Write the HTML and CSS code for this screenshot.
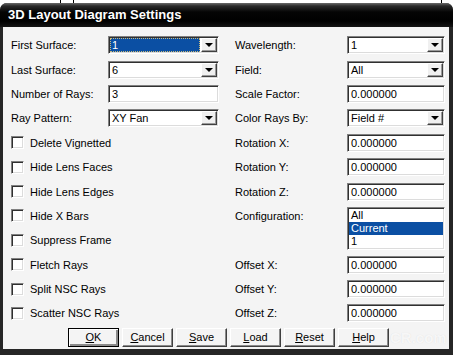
FILE: index.html
```html
<!DOCTYPE html>
<html lang="en">

<head>
    <meta charset="UTF-8">
    <title>3D Layout Diagram Settings</title>
    <link rel="stylesheet" href="styles.css">
</head>

<body>
    <!-- 窗口后面的表格残留 -->
    <div class="backdrop">
        <i class="grid-line first"></i>
        <i class="grid-line"></i>
        <i class="grid-line far"></i>
    </div>

    <div class="window">
        <div class="titlebar">3D Layout Diagram Settings</div>

        <div class="client">
            <div class="form">
                <span class="label">First Surface:</span>
                <div class="field select"><span class="value selected">1</span><span class="arrow"></span></div>
                <span class="label">Wavelength:</span>
                <div class="field select narrow"><span class="value">1</span><span class="arrow"></span></div>

                <span class="label">Last Surface:</span>
                <div class="field select"><span class="value">6</span><span class="arrow"></span></div>
                <span class="label">Field:</span>
                <div class="field select narrow"><span class="value">All</span><span class="arrow"></span></div>

                <span class="label">Number of Rays:</span>
                <div class="field"><span class="value">3</span></div>
                <span class="label">Scale Factor:</span>
                <div class="field narrow"><span class="value">0.000000</span></div>

                <span class="label">Ray Pattern:</span>
                <div class="field select"><span class="value">XY Fan</span><span class="arrow"></span></div>
                <span class="label">Color Rays By:</span>
                <div class="field select narrow"><span class="value">Field #</span><span class="arrow"></span></div>

                <label class="check"><span class="box"></span>Delete Vignetted</label>
                <span class="label">Rotation X:</span>
                <div class="field narrow"><span class="value">0.000000</span></div>

                <label class="check"><span class="box"></span>Hide Lens Faces</label>
                <span class="label">Rotation Y:</span>
                <div class="field narrow"><span class="value">0.000000</span></div>

                <label class="check"><span class="box"></span>Hide Lens Edges</label>
                <span class="label">Rotation Z:</span>
                <div class="field narrow"><span class="value">0.000000</span></div>

                <label class="check"><span class="box"></span>Hide X Bars</label>
                <span class="label">Configuration:</span>
                <div class="listbox">
                    <div class="item">All</div>
                    <div class="item selected">Current</div>
                    <div class="item">1</div>
                </div>

                <label class="check"><span class="box"></span>Suppress Frame</label>
                <span></span>

                <label class="check"><span class="box"></span>Fletch Rays</label>
                <span class="label">Offset X:</span>
                <div class="field narrow"><span class="value">0.000000</span></div>

                <label class="check"><span class="box"></span>Split NSC Rays</label>
                <span class="label">Offset Y:</span>
                <div class="field narrow"><span class="value">0.000000</span></div>

                <label class="check"><span class="box"></span>Scatter NSC Rays</label>
                <span class="label">Offset Z:</span>
                <div class="field narrow"><span class="value">0.000000</span></div>
            </div>

            <!-- 底部按钮 -->
            <div class="buttons">
                <button class="btn default"><u>O</u>K</button>
                <button class="btn"><u>C</u>ancel</button>
                <button class="btn"><u>S</u>ave</button>
                <button class="btn"><u>L</u>oad</button>
                <button class="btn"><u>R</u>eset</button>
                <button class="btn"><u>H</u>elp</button>
            </div>

            <div class="watermark">CR.com</div>
        </div>
    </div>
</body>

</html>
```

FILE: styles.css
```css
/* 基本样式 */
body {
    margin: 0;
    background-color: #ffffff;
    font-family: "Liberation Sans", Arial, sans-serif;
    font-size: 11px;
    color: #000000;
}

.backdrop {
    height: 3px;
    display: flex;
}

.grid-line {
    width: 1px;
    height: 3px;
    background-color: #000000;
    margin-left: 12px;
}

.grid-line.first {
    margin-left: 60px;
}

.grid-line.far {
    margin-left: 367px;
}

/* 窗口外框 */
.window {
    width: 453px;
    height: 352px;
    background-color: #262626;
    border-radius: 7px 7px 0 0;
    overflow: hidden;
}

.titlebar {
    height: 24px;
    box-sizing: border-box;
    padding: 4px 0 0 8px;
    background: linear-gradient(#6a6a6a 0, #2a2a2a 3px, #050505 9px, #000000 18px, #141414 24px);
    color: #ffffff;
    font-family: "Liberation Sans", Arial, sans-serif;
    font-weight: bold;
    font-size: 13px;
    line-height: 16px;
}

.client {
    position: relative;
    margin: 0 4px 0 3px;
    height: 322px;
    background-color: #f4f4f4;
}

/* 表单网格 */
.form {
    display: grid;
    grid-template-columns: 97px 127px 112px 98px;
    grid-auto-rows: 24.4px;
    align-items: center;
    padding: 6px 0 0 8px;
}

.field {
    width: 111px;
    height: 18px;
    box-sizing: border-box;
    display: flex;
    align-items: center;
    background-color: #ffffff;
    border: 1px solid;
    border-color: #808080 #ffffff #ffffff #808080;
    box-shadow: inset 1px 1px #303030, inset -1px -1px #dcdcdc;
}

.field.narrow {
    width: 98px;
}

.value {
    flex: 1;
    align-self: stretch;
    margin: 1px 0 1px 1px;
    padding-left: 2px;
    line-height: 14px;
    white-space: nowrap;
}

.value.selected {
    background-color: #0b4fa3;
    color: #ffffff;
    margin-right: 1px;
    outline: 1px dotted #c9b97a;
    outline-offset: -1px;
}

/* 下拉箭头按钮 */
.arrow {
    width: 16px;
    height: 14px;
    margin-right: 1px;
    box-sizing: border-box;
    background-color: #f0f0f0;
    border: 1px solid;
    border-color: #ffffff #404040 #404040 #ffffff;
    box-shadow: inset -1px -1px #9a9a9a;
    position: relative;
}

.arrow::after {
    content: '';
    position: absolute;
    left: 3px;
    top: 4px;
    border-left: 4px solid transparent;
    border-right: 4px solid transparent;
    border-top: 4px solid #000000;
}

/* 复选框 */
.check {
    grid-column: span 2;
    display: flex;
    align-items: center;
}

.box {
    width: 13px;
    height: 13px;
    box-sizing: border-box;
    margin-right: 6px;
    background-color: #ffffff;
    border: 1px solid;
    border-color: #808080 #ffffff #ffffff #808080;
    box-shadow: inset 1px 1px #303030, inset -1px -1px #dcdcdc;
}

/* 列表框 */
.listbox {
    grid-row: span 2;
    align-self: start;
    margin-top: 3px;
    width: 98px;
    height: 43px;
    box-sizing: border-box;
    padding: 1px;
    background-color: #ffffff;
    border: 1px solid;
    border-color: #808080 #ffffff #ffffff #808080;
    box-shadow: inset 1px 1px #303030, inset -1px -1px #dcdcdc;
}

.item {
    height: 13px;
    line-height: 13px;
    padding-left: 2px;
}

.item.selected {
    background-color: #0b4fa3;
    color: #ffffff;
}

/* 底部按钮 */
.buttons {
    display: flex;
    gap: 3px;
    margin-top: 2px;
    padding-left: 65px;
}

.btn {
    width: 51px;
    height: 19px;
    box-sizing: border-box;
    padding: 0;
    font-family: "Liberation Sans", Arial, sans-serif;
    font-size: 11px;
    color: #000000;
    background-color: #f4f4f4;
    border: 1px solid;
    border-color: #ffffff #404040 #404040 #ffffff;
    box-shadow: inset -1px -1px #8a8a8a;
}

.btn.default {
    border-color: #000000;
    box-shadow: inset 1px 1px #ffffff, inset -2px -2px #8a8a8a;
}

.watermark {
    position: absolute;
    left: 387px;
    top: 302px;
    font-size: 15px;
    font-weight: bold;
    color: rgba(255, 255, 255, 0.75);
    text-shadow: 0 0 1px rgba(0, 0, 0, 0.1);
}
```
